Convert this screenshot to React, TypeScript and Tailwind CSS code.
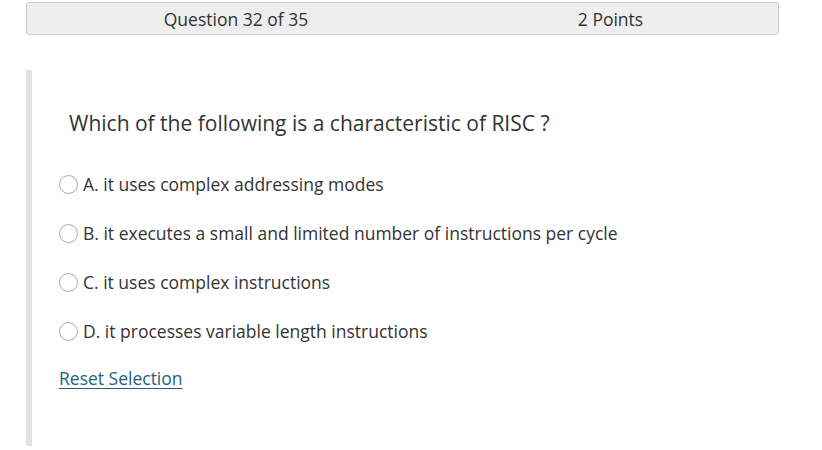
import React, { useState } from 'react';

const options = [
  'A. it uses complex addressing modes',
  'B. it executes a small and limited number of instructions per cycle',
  'C. it uses complex instructions',
  'D. it processes variable length instructions',
];

const App = () => {
  const [selected, setSelected] = useState<number | null>(null);

  return (
    <div className="w-[822px] h-[450px] bg-white text-[#333333] overflow-hidden" style={{ fontFamily: '"Open Sans", "Noto Sans", sans-serif' }}>
      {/* Header */}
      <div className="ml-[26px] mt-[2px] w-[753px] h-[33px] grid grid-cols-[418px_1fr] items-center bg-[#eeeeee] border border-[#cccccc] rounded-[3px] text-[17.5px] leading-[24px]">
        <div className="text-center">Question 32 of 35</div>
        <div className="text-center pr-[2px]">2 Points</div>
      </div>

      {/* Question */}
      <div className="ml-[26px] mt-[35px] h-[376px] border-l-[6px] border-[#e4e4e4] pl-[37px] pt-[39px]">
        <h2 className="text-[21px] leading-[28px] text-[#333333]">
          Which of the following is a characteristic of RISC ?
        </h2>

        <div className="mt-[33px] -ml-[10px] flex flex-col gap-[21px]">
          {options.map((opt, index) => (
            <label key={index} className="flex items-center h-[28px] cursor-pointer">
              <span
                onClick={() => setSelected(index)}
                className="w-[19px] h-[19px] rounded-full border border-[#aaaaaa] bg-white flex items-center justify-center shrink-0"
              >
                {selected === index && <span className="w-[9px] h-[9px] rounded-full bg-[#333333]" />}
              </span>
              <span className="ml-[5px] text-[17.5px]">{opt}</span>
            </label>
          ))}
        </div>

        <button
          onClick={() => setSelected(null)}
          className="mt-[19px] -ml-[10px] text-[17.5px] leading-[28px] text-[#246379] underline underline-offset-[3px]"
        >
          Reset Selection
        </button>
      </div>
    </div>
  );
};

export default App;
